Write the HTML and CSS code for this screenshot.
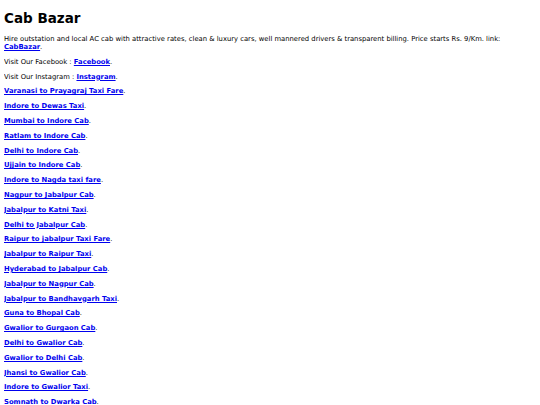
FILE: index.html
```html
<!DOCTYPE html>
<html lang="en">
<head>
<meta charset="utf-8">
<title>Cab Bazar</title>
<link rel="stylesheet" href="styles.css">
</head>
<body>
<h1 class="title">Cab Bazar</h1>
<p>Hire outstation and local AC cab with attractive rates, clean &amp; luxury cars, well mannered drivers &amp; transparent billing. Price starts Rs. 9/Km. link: <a href="#">CabBazar</a>.</p>
<p>Visit Our Facebook : <a href="#">Facebook</a>.</p>
<p>Visit Our Instagram : <a href="#">Instagram</a>.</p>
<p><a href="#">Varanasi to Prayagraj Taxi Fare</a>.</p>
<p><a href="#">Indore to Dewas Taxi</a>.</p>
<p><a href="#">Mumbai to Indore Cab</a>.</p>
<p><a href="#">Ratlam to Indore Cab</a>.</p>
<p><a href="#">Delhi to Indore Cab</a>.</p>
<p><a href="#">Ujjain to Indore Cab</a>.</p>
<p><a href="#">Indore to Nagda taxi fare</a>.</p>
<p><a href="#">Nagpur to Jabalpur Cab</a>.</p>
<p><a href="#">Jabalpur to Katni Taxi</a>.</p>
<p><a href="#">Delhi to Jabalpur Cab</a>.</p>
<p><a href="#">Raipur to jabalpur Taxi Fare</a>.</p>
<p><a href="#">Jabalpur to Raipur Taxi</a>.</p>
<p><a href="#">Hyderabad to Jabalpur Cab</a>.</p>
<p><a href="#">Jabalpur to Nagpur Cab</a>.</p>
<p><a href="#">Jabalpur to Bandhavgarh Taxi</a>.</p>
<p><a href="#">Guna to Bhopal Cab</a>.</p>
<p><a href="#">Gwalior to Gurgaon Cab</a>.</p>
<p><a href="#">Delhi to Gwalior Cab</a>.</p>
<p><a href="#">Gwalior to Delhi Cab</a>.</p>
<p><a href="#">Jhansi to Gwalior Cab</a>.</p>
<p><a href="#">Indore to Gwalior Taxi</a>.</p>
<p class="last"><a href="#">Somnath to Dwarka Cab</a>.</p>
</body>
</html>
```

FILE: styles.css
```css
html, body {
  background: #fff;
}
body {
  margin: 4px;
  font-family: "DejaVu Sans", Verdana, sans-serif;
  font-size: 6.8px;
  color: #000;
}
.title {
  font-size: 13.5px;
  font-weight: bold;
  margin: 6px 0 9px;
}
p {
  margin: 1em 0;
}
p.last {
  margin-bottom: 0;
}
a {
  color: #0000ee;
  font-weight: bold;
  text-decoration: underline;
}
```
